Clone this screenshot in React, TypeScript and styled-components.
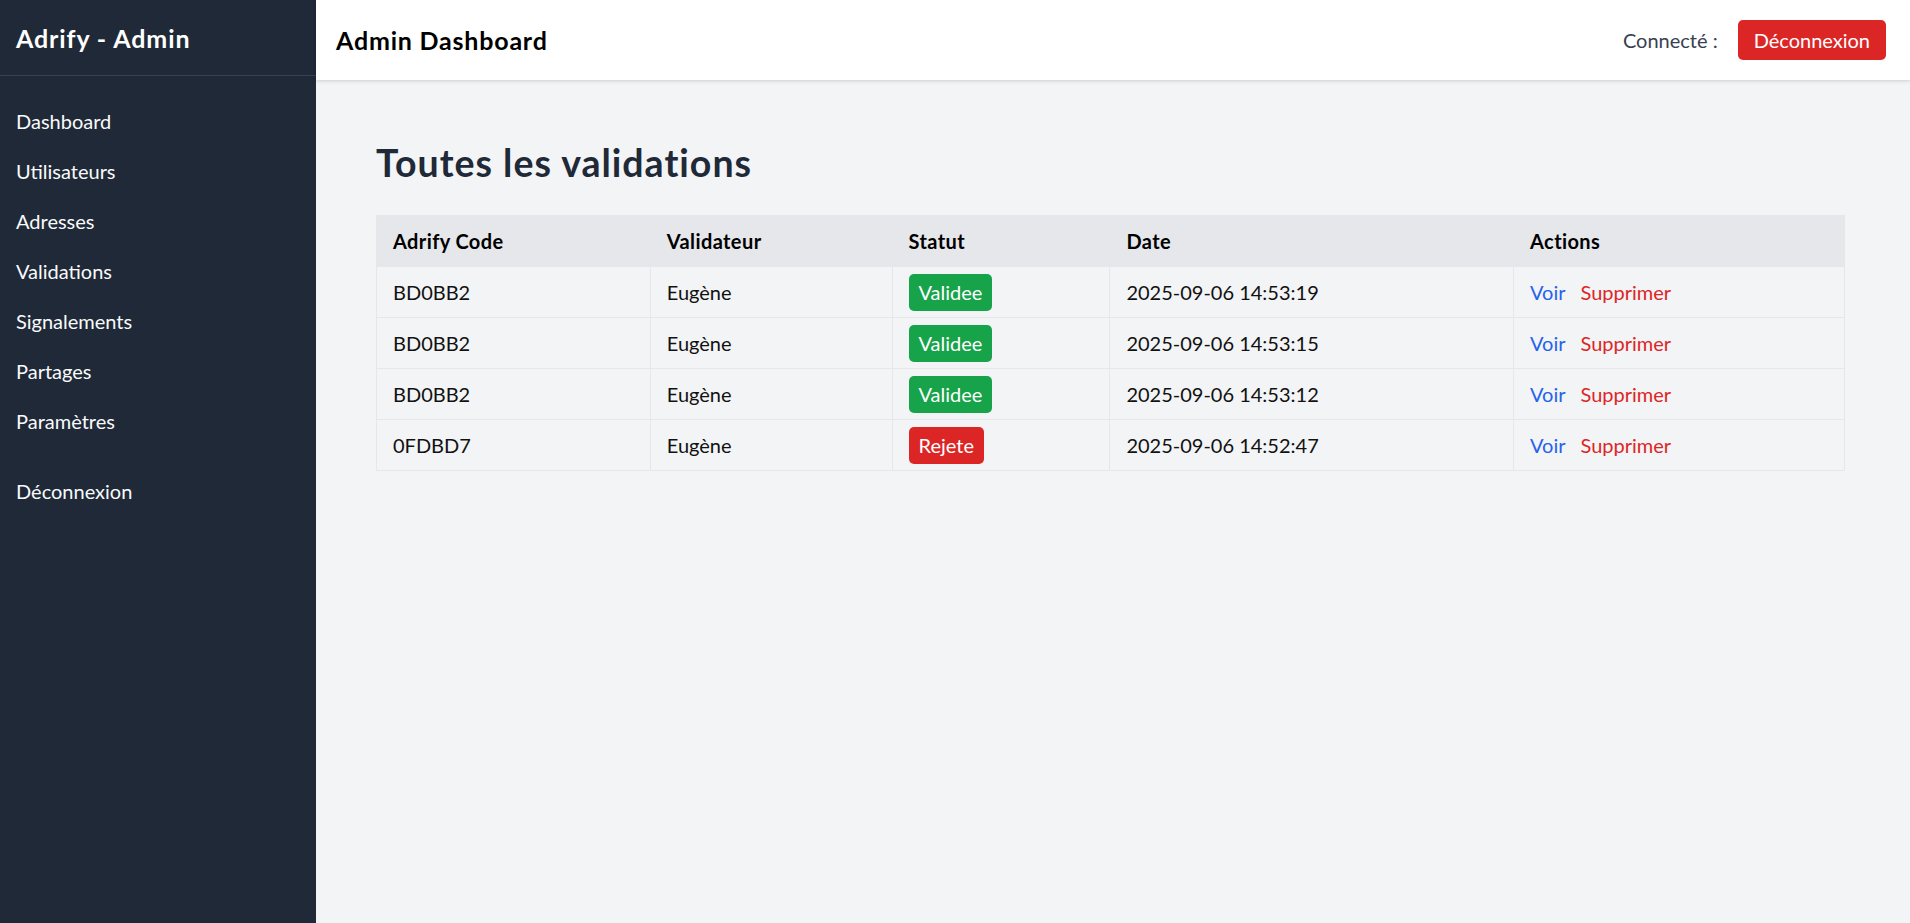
import styled, { createGlobalStyle } from 'styled-components';

const GlobalStyle = createGlobalStyle`
  html, body {
    margin: 0;
    padding: 0;
    height: 100%;
  }
  body {
    font-family: Lato, "Open Sans", "Liberation Sans", sans-serif;
    background: #f3f4f6;
  }
  #root {
    height: 100%;
  }
  * {
    box-sizing: border-box;
  }
`;

const navItems = ['Dashboard', 'Utilisateurs', 'Adresses', 'Validations', 'Signalements', 'Partages', 'Paramètres'];

type Status = 'Validee' | 'Rejete';

interface IValidation {
  code: string;
  validator: string;
  status: Status;
  date: string;
}

const validations: IValidation[] = [
  { code: 'BD0BB2', validator: 'Eugène', status: 'Validee', date: '2025-09-06 14:53:19' },
  { code: 'BD0BB2', validator: 'Eugène', status: 'Validee', date: '2025-09-06 14:53:15' },
  { code: 'BD0BB2', validator: 'Eugène', status: 'Validee', date: '2025-09-06 14:53:12' },
  { code: '0FDBD7', validator: 'Eugène', status: 'Rejete', date: '2025-09-06 14:52:47' },
];

const columns = [
  { label: 'Adrify Code', width: '18.65%' },
  { label: 'Validateur', width: '16.47%' },
  { label: 'Statut', width: '14.84%' },
  { label: 'Date', width: '27.5%' },
  { label: 'Actions', width: '22.54%' },
];

const App = () => {
  return (
    <Layout>
      <GlobalStyle />
      <Sidebar>
        <Brand>Adrify - Admin</Brand>
        <Nav>
          {navItems.map((item) => (
            <NavLink key={item}>{item}</NavLink>
          ))}
          <NavLink $spaced>Déconnexion</NavLink>
        </Nav>
      </Sidebar>
      <Main>
        <Topbar>
          <TopTitle>Admin Dashboard</TopTitle>
          <TopRight>
            <Connected>Connecté :</Connected>
            <LogoutButton>Déconnexion</LogoutButton>
          </TopRight>
        </Topbar>
        <Content>
          <PageTitle>Toutes les validations</PageTitle>
          <Table>
            <colgroup>
              {columns.map((c) => (
                <col key={c.label} style={{ width: c.width }} />
              ))}
            </colgroup>
            <thead>
              <tr>
                {columns.map((c) => (
                  <Th key={c.label}>{c.label}</Th>
                ))}
              </tr>
            </thead>
            <tbody>
              {validations.map((v, i) => (
                <tr key={i}>
                  <Td>{v.code}</Td>
                  <Td>{v.validator}</Td>
                  <Td>
                    <Badge $status={v.status}>{v.status}</Badge>
                  </Td>
                  <Td>{v.date}</Td>
                  <Td>
                    <ActionLink $danger={false}>Voir</ActionLink>
                    <ActionLink $danger>Supprimer</ActionLink>
                  </Td>
                </tr>
              ))}
            </tbody>
          </Table>
        </Content>
      </Main>
    </Layout>
  );
};

const Layout = styled.div`
  display: flex;
  height: 100%;
  min-height: 923px;
`;

const Sidebar = styled.aside`
  width: 316px;
  flex-shrink: 0;
  background-color: #1f2937;
  color: #ffffff;
  display: flex;
  flex-direction: column;
`;

const Brand = styled.div`
  height: 76px;
  padding: 0 16px;
  display: flex;
  align-items: center;
  font-size: 25px;
  font-weight: 700;
  letter-spacing: 0.9px;
  border-bottom: 1px solid #374151;
`;

const Nav = styled.nav`
  display: flex;
  flex-direction: column;
  padding: 20px 0 0;
`;

const NavLink = styled.a<{ $spaced?: boolean }>`
  display: block;
  padding: 10px 16px;
  font-size: 20px;
  line-height: 30px;
  color: #f9fafb;
  cursor: pointer;
  margin-top: ${(props) => (props.$spaced ? '20px' : '0')};
`;

const Main = styled.div`
  flex: 1;
  display: flex;
  flex-direction: column;
  min-width: 0;
`;

const Topbar = styled.header`
  height: 80px;
  background-color: #ffffff;
  box-shadow: 0 2px 4px rgba(0, 0, 0, 0.08), 0 1px 2px rgba(0, 0, 0, 0.06);
  display: flex;
  align-items: center;
  justify-content: space-between;
  padding: 0 24px 0 20px;
  position: relative;
  z-index: 1;
`;

const TopTitle = styled.h1`
  margin: 0;
  font-size: 25px;
  font-weight: 700;
  letter-spacing: 0.8px;
  color: #000000;
`;

const TopRight = styled.div`
  display: flex;
  align-items: center;
  gap: 20px;
`;

const Connected = styled.span`
  font-size: 20px;
  color: #374151;
`;

const LogoutButton = styled.button`
  height: 40px;
  padding: 0 16px;
  border: 0;
  border-radius: 5px;
  background-color: #dc2626;
  color: #ffffff;
  font-family: inherit;
  font-size: 20px;
  cursor: pointer;
`;

const Content = styled.main`
  padding: 60px 65px 60px 60px;
`;

const PageTitle = styled.h2`
  margin: 0 0 30px;
  font-size: 37.5px;
  line-height: 45px;
  font-weight: 700;
  letter-spacing: 1px;
  color: #1f2937;
`;

const Table = styled.table`
  width: 100%;
  border-collapse: collapse;
  table-layout: fixed;
  border: 1px solid #e5e7eb;
`;

const Th = styled.th`
  height: 51px;
  padding: 0 16px;
  text-align: left;
  font-size: 20px;
  font-weight: 700;
  letter-spacing: 0.4px;
  color: #000000;
  background-color: #e5e7eb;
  border: 1px solid #e5e7eb;
`;

const Td = styled.td`
  height: 51px;
  padding: 0 16px;
  font-size: 20px;
  color: #111111;
  border: 1px solid #e5e7eb;
  vertical-align: middle;
  white-space: nowrap;
`;

const Badge = styled.span<{ $status: Status }>`
  display: inline-block;
  padding: 5px 10px;
  line-height: 27px;
  border-radius: 5px;
  color: #ffffff;
  font-size: 20px;
  vertical-align: middle;
  background-color: ${(props) => (props.$status === 'Validee' ? '#16a34a' : '#dc2626')};
`;

const ActionLink = styled.a<{ $danger: boolean }>`
  margin-right: 15px;
  font-size: 20px;
  cursor: pointer;
  color: ${(props) => (props.$danger ? '#dc2626' : '#2563eb')};
`;

export default App;
